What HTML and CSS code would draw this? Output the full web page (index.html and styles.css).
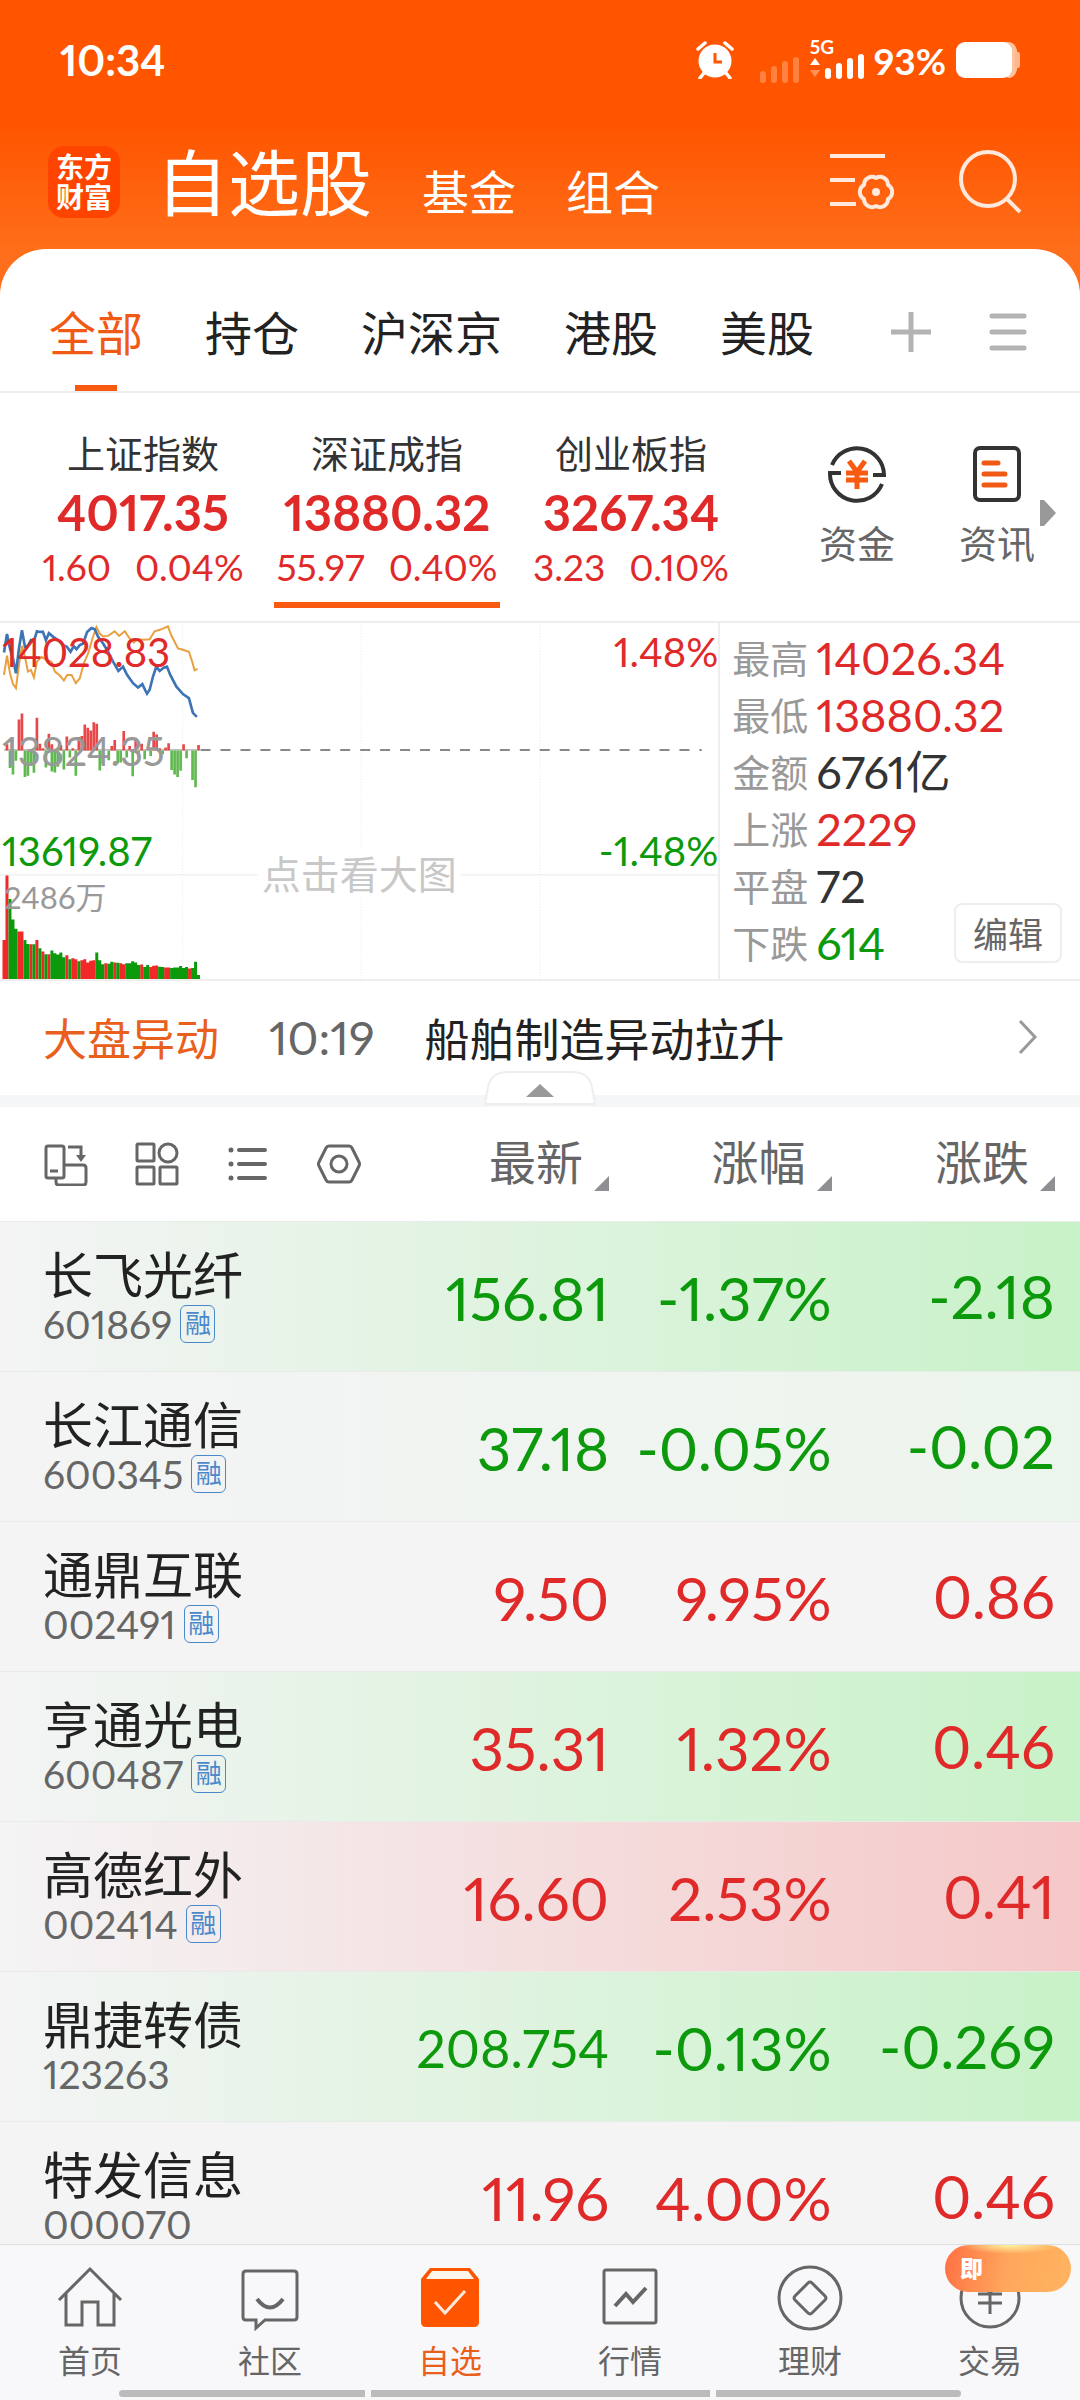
FILE: index.html
```html
<!DOCTYPE html>
<html lang="zh-CN">
<head>
<meta charset="utf-8">
<meta name="viewport" content="width=device-width, initial-scale=1">
<title>自选股</title>
<link rel="stylesheet" href="styles.css">
</head>
<body>
<header class="top">
  <div class="status">
    <span class="clock">10:34</span>
    <div class="status-icons">
      <svg class="alarm" viewBox="0 0 38 38" width="38" height="38">
        <circle cx="19" cy="20" r="16.500" fill="#fff"/>
        <path d="M2 8 9 2M36 8 29 2M8 32 4 37M30 32l4 5" stroke="#fff" stroke-width="3.500" stroke-linecap="round"/>
        <path d="M19 12v9h7" fill="none" stroke="#ff5500" stroke-width="3"/>
      </svg>
      <svg viewBox="0 0 40 26" width="40" height="26"><path d="M3 23v-6M14 23V12M25 23V7M36 23V3" stroke="#ff8240" stroke-width="6" stroke-linecap="round"/></svg>
      <div class="net"><span>5G</span>
        <svg viewBox="0 0 54 26" width="54" height="26"><path d="M0 11 5 4l5 7z" fill="#fff"/><path d="M0 16h10l-5 7z" fill="#ff9257"/><path d="M18 22v-5M29 22V12M40 22V7M51 22V3" stroke="#fff" stroke-width="6" stroke-linecap="round"/></svg>
      </div>
      <span class="battery-text">93%</span>
      <svg viewBox="0 0 64 38" width="64" height="38"><path d="M10 1h42q10 0 10 18T52 37" fill="#ffc29f"/><rect x="59" y="11" width="5" height="16" rx="2" fill="#ffb68c"/><rect x="0" y="1" width="56" height="36" rx="9" fill="#fff"/></svg>
    </div>
  </div>
  <div class="bar">
    <div class="logo">东方<br>财富</div>
    <nav class="sections">
      <a class="big" href="#">自选股</a><a href="#">基金</a><a href="#">组合</a>
    </nav>
    <div class="bar-actions">
      <button aria-label="设置">
        <svg viewBox="0 0 64 60" width="64" height="60" fill="none" stroke="#ffe9dc" stroke-width="4"><path d="M0 4h55M0 28h25M0 52h26"/><path d="M58 47A8 8 0 0 1 46 54A8 8 0 0 1 34 47A8 8 0 0 1 34 33A8 8 0 0 1 46 26A8 8 0 0 1 58 33A8 8 0 0 1 58 47z" stroke-linejoin="round"/><circle cx="46" cy="40" r="4" fill="#ffe9dc" stroke="none"/></svg>
      </button>
      <button aria-label="搜索">
        <svg viewBox="0 0 64 66" width="64" height="66" fill="none" stroke="#ffe9dc" stroke-width="4"><circle cx="30" cy="30" r="27"/><path d="m49 50 13 13"/></svg>
      </button>
    </div>
  </div>
</header>

<main class="sheet">
  <nav class="tabs">
    <a class="on" href="#">全部</a><a href="#">持仓</a><a href="#">沪深京</a><a href="#">港股</a><a href="#">美股</a>
    <div class="tab-actions">
      <button aria-label="添加"><svg viewBox="0 0 40 40" width="40" height="40" stroke="#b3b3b3" stroke-width="5"><path d="M20 0v40M0 20h40"/></svg></button>
      <button aria-label="列表"><svg viewBox="0 0 38 38" width="38" height="38" stroke="#b3b3b3" stroke-width="5" stroke-linecap="round"><path d="M3 3h32M3 19h32M3 35h32"/></svg></button>
    </div>
  </nav>

  <section class="indices">
    <button class="index"><span class="iname">上证指数</span><b>4017.35</b><span class="delta"><i>1.60</i><i>0.04%</i></span></button>
    <button class="index current"><span class="iname">深证成指</span><b>13880.32</b><span class="delta"><i>55.97</i><i>0.40%</i></span></button>
    <button class="index"><span class="iname">创业板指</span><b>3267.34</b><span class="delta"><i>3.23</i><i>0.10%</i></span></button>
    <div class="tools">
      <a href="#"><svg viewBox="0 0 60 60" width="60" height="60" fill="none" stroke="#333" stroke-width="4"><path d="M5 21A27 27 0 0 1 57 31H46M55 40A27 27 0 0 1 3 29h11"/><path d="m22 17 8 11 8-11M30 28v17M19 29h22M19 36h22" stroke="#f85a10" stroke-width="5"/></svg>资金</a>
      <a href="#"><svg viewBox="0 0 48 60" width="48" height="60" fill="none" stroke="#333" stroke-width="4"><rect x="2" y="4" width="44" height="52" rx="5"/><path d="M11 19h14M11 30h21M11 41h21" stroke="#f05a14" stroke-width="5" stroke-linecap="round"/></svg>资讯</a>
      <svg class="more" viewBox="0 0 16 26" width="16" height="26"><path d="M0 0h4l12 13L4 26H0z" fill="#999"/></svg>
    </div>
  </section>

  <section class="market">
    <div class="chart">
      <svg class="plot" viewBox="0 33 2160 1077" preserveAspectRatio="none" fill="none">
        <path d="M549 36V1110M1086 36V1110M1623 36V1110" stroke="#eee" stroke-width="3" stroke-dasharray="4 5"/>
        <path d="M0 795H2160" stroke="#eee" stroke-width="4"/>
        <path d="M12 417H600" stroke="#aaa" stroke-width="4"/>
        <path d="M603 417H2110" stroke="#888" stroke-width="6" stroke-dasharray="30 30"/>
        <path class="minor" d="M12 190 21 132 30 185 39 218 48 230 57 160 66 102 75 135 84 180 93 175 102 198 111 150 125 135 140 145 155 150 165 180 180 192 192 207 202 190 215 190 228 215 240 200 252 155 265 125 278 80 290 45 300 65 310 74 325 72 345 58 358 72 375 58 390 80 402 92 415 82 432 84 450 82 465 58 485 52 505 43 515 70 535 110 550 114 568 120 578 150 585 176 594 172"/>
        <path class="price" d="M12 122 21 66 30 110 39 140 48 185 57 110 66 55 75 105 84 102 93 85 102 88 111 58 120 60 129 60 138 85 147 64 160 75 175 85 190 100 201 105 212 120 222 103 230 112 240 100 250 95 262 60 275 48 285 52 295 75 310 95 325 120 340 150 356 178 370 165 382 190 400 215 415 228 428 218 436 235 442 247 450 235 460 195 470 165 480 178 492 168 502 165 512 190 530 225 550 248 568 260 580 305 592 317"/>
        <path class="flow-up" d="M21 419V400M57 419V325M66 419V307M111 419V320M120 419V398M129 419V412M147 419V368M156 419V400M183 419V403M201 419V376M219 419V412M237 419V378M246 419V375M255 419V340M264 419V350M273 419V358M282 419V333M291 419V338M336 419V405M345 419V387M372 419V360M390 419V405M408 419V380M426 419V398M462 419V362M471 419V370M480 419V412M498 419V410M507 419V397M552 419V400M597 419V402"/>
        <path class="flow-down" d="M30 419V472M39 419V491M48 419V450M75 419V499M84 419V495M93 419V465M102 419V486M138 419V470M156 419V482M165 419V485M174 419V468M192 419V476M210 419V440M228 419V495M300 419V479M309 419V460M327 419V448M354 419V458M363 419V455M381 419V440M399 419V497M417 419V440M435 419V445M453 419V435M489 419V430M516 419V478M525 419V491M534 419V499M543 419V480M561 419V442M579 419V508M588 419V530"/>
        <path class="vol-up" d="M12 1110V992M21 1110V797M57 1110V966M66 1110V966M93 1110V1005M111 1110V992M129 1110V1027M147 1110V1035M201 1110V1038M219 1110V1047M228 1110V1050M246 1110V1053M255 1110V1050M264 1110V1060M273 1110V1055M282 1110V1053M318 1110V1062M345 1110V1060M363 1110V1062M372 1110V1065M426 1110V1066M453 1110V1074M462 1110V1070M471 1110V1069M498 1110V1075M507 1110V1075M570 1110V1078"/>
        <path class="vol-down" d="M30 1110V868M39 1110V930M48 1110V958M75 1110V992M84 1110V1004M102 1110V1005M120 1110V1017M138 1110V1035M156 1110V1024M165 1110V1032M174 1110V1036M183 1110V1030M192 1110V1044M210 1110V1050M237 1110V1056M291 1110V1030M300 1110V1053M309 1110V1065M327 1110V1064M336 1110V1058M354 1110V1061M381 1110V1062M390 1110V1062M399 1110V1056M408 1110V1060M417 1110V1068M435 1110V1074M444 1110V1068M480 1110V1073M489 1110V1074M516 1110V1077M525 1110V1075M534 1110V1075M543 1110V1071M552 1110V1077M561 1110V1074M579 1110V1077M588 1110V1058M597 1110V1098"/>
      </svg>
      <span class="axis hi up">14028.83</span><span class="axis hi right up">1.48%</span>
      <span class="axis mid">13824.35</span>
      <span class="axis lo down">13619.87</span><span class="axis lo right down">-1.48%</span>
      <span class="vol-label">2486万</span>
      <span class="hint">点击看大图</span>
    </div>
    <div class="stats">
      <dl>
        <dt>最高</dt><dd class="up">14026.34</dd>
        <dt>最低</dt><dd class="up">13880.32</dd>
        <dt>金额</dt><dd>6761亿</dd>
        <dt>上涨</dt><dd class="up">2229</dd>
        <dt>平盘</dt><dd>72</dd>
        <dt>下跌</dt><dd class="down">614</dd>
      </dl>
      <button class="edit">编辑</button>
    </div>
  </section>

  <a class="news" href="#">
    <span class="tag">大盘异动</span><time>10:19</time><span>船舶制造异动拉升</span>
    <svg viewBox="0 0 20 36" width="20" height="36" fill="none" stroke="#999" stroke-width="3"><path d="m2 2 15 16L2 34"/></svg>
  </a>
  <div class="divider">
    <button class="fold" aria-label="收起"><svg viewBox="0 0 112 34" width="112" height="34"><path d="M1 33 4 16Q7 1 24 1h64q17 0 20 15l3 17z" fill="#fff" stroke="#eee" stroke-width="2"/><path d="M42 26 56 13l14 13z" fill="#999"/></svg></button>
  </div>

  <table class="quotes">
    <colgroup><col class="c-name"><col class="c-price"><col class="c-pct"><col class="c-chg"></colgroup>
    <thead>
      <tr>
        <th>
          <div class="views">
            <button aria-label="横屏"><svg viewBox="0 0 44 44" width="44" height="44"><rect x="2" y="4" width="18" height="32" rx="2"/><path d="M24 5h13v12M12 36v4q0 3 3 3h24q3 0 3-3V26q0-3-3-3H20M6 29h8"/><path d="m32 13 5 7 5-7z" fill="#666" stroke="none"/></svg></button>
            <button aria-label="宫格"><svg viewBox="0 0 44 44" width="44" height="44"><rect x="2" y="2" width="17" height="17" rx="1"/><circle cx="33" cy="11" r="9"/><rect x="2" y="25" width="17" height="17" rx="1"/><rect x="25" y="25" width="17" height="17" rx="1"/></svg></button>
            <button aria-label="列表"><svg viewBox="0 0 44 44" width="44" height="44" stroke-linecap="round"><path class="lines" d="M13 8h26M13 22h26M13 36h26"/><path class="dots" d="M5 8v0M5 22v0M5 36v0"/></svg></button>
            <button aria-label="设置"><svg viewBox="0 0 44 44" width="44" height="44"><path d="M12 4h20q2 0 3 2l7 14q1 2 0 4l-7 14q-1 2-3 2H12q-2 0-3-2L2 24q-1-2 0-4L9 6q1-2 3-2z"/><circle cx="22" cy="22" r="8"/></svg></button>
          </div>
        </th>
        <th><button class="sort">最新</button></th><th><button class="sort">涨幅</button></th><th><button class="sort">涨跌</button></th>
      </tr>
    </thead>
    <tbody>
      <tr class="g2 down"><td><div class="stock">长飞光纤</div><div class="code">601869<em>融</em></div></td><td>156.81</td><td>-1.37%</td><td>-2.18</td></tr>
      <tr class="g1 down"><td><div class="stock">长江通信</div><div class="code">600345<em>融</em></div></td><td>37.18</td><td>-0.05%</td><td>-0.02</td></tr>
      <tr class="up"><td><div class="stock">通鼎互联</div><div class="code">002491<em>融</em></div></td><td>9.50</td><td>9.95%</td><td>0.86</td></tr>
      <tr class="g2 up"><td><div class="stock">亨通光电</div><div class="code">600487<em>融</em></div></td><td>35.31</td><td>1.32%</td><td>0.46</td></tr>
      <tr class="r2 up"><td><div class="stock">高德红外</div><div class="code">002414<em>融</em></div></td><td>16.60</td><td>2.53%</td><td>0.41</td></tr>
      <tr class="g2 down"><td><div class="stock">鼎捷转债</div><div class="code">123263</div></td><td class="long">208.754</td><td>-0.13%</td><td>-0.269</td></tr>
      <tr class="up"><td><div class="stock">特发信息</div><div class="code">000070</div></td><td>11.96</td><td>4.00%</td><td>0.46</td></tr>
    </tbody>
  </table>
</main>

<footer class="dock">
  <nav>
    <a href="#"><svg viewBox="0 0 66 66" width="66" height="66"><path d="M2 35 33 4l31 31M9 29v31h16V37h16v23h16V29"/></svg>首页</a>
    <a href="#"><svg viewBox="0 0 66 66" width="66" height="66"><path d="M9 6h48q3 0 3 3v43q0 3-3 3H28l-9 8v-8H9q-3 0-3-3V9q0-3 3-3z"/><path d="M20 34q13 17 26 0" stroke-width="4"/></svg>社区</a>
    <a class="on" href="#"><svg viewBox="0 0 66 66" width="66" height="66"><path d="M13 3h40l9 11v43q0 5-5 5H9q-5 0-5-5V14z" fill="#ff5500" stroke="none"/><path d="m15 6-6 8h48l-6-8z" fill="#fff4ec" stroke="none"/><path d="m18 37 10 11 20-22" stroke="#ffe9dc"/></svg>自选</a>
    <a href="#"><svg viewBox="0 0 66 66" width="66" height="66"><rect x="7" y="5" width="52" height="53" rx="2"/><path d="m18 41 11-12 7 8 13-14" stroke-width="4"/></svg>行情</a>
    <a href="#"><svg viewBox="0 0 66 66" width="66" height="66"><circle cx="33" cy="33" r="31"/><path d="m31 18-13 13q-2 2 0 4l13 13q2 2 4 0l13-13q2-2 0-4L35 18q-2-2-4 0z"/></svg>理财</a>
    <a href="#"><svg viewBox="0 0 66 66" width="66" height="66"><circle cx="33" cy="33" r="29"/><path d="m24 17 9 11 9-11M33 28v21M21 29h24M21 38h24"/></svg>交易<span class="promo">即</span></a>
  </nav>
  <div class="home"><i></i><i></i><i></i></div>
</footer>
</body>
</html>
```
FILE: styles.css
```css
* { box-sizing: border-box; }
body {
  margin: 0;
  height: 100vh;
  display: flex;
  flex-direction: column;
  overflow: hidden;
  background: #ff6e1a;
  color: #222;
  font-family: Lato, "Noto Sans CJK SC", sans-serif;
  font-variant-numeric: proportional-nums;
}
a { color: inherit; text-decoration: none; }
button { font: inherit; color: inherit; background: none; border: 0; padding: 0; }
i, em { font-style: normal; }
svg { display: block; flex: none; }
.up { color: #e02a2a; }
.down { color: #0c9a0c; }

.top { flex: none; color: #fff; background: linear-gradient(#ff5500 50%, #ff6e1a); }
.status { display: flex; align-items: center; justify-content: space-between; height: 120px; padding: 0 60px; }
.clock { font-size: 42px; font-weight: 700; }
.status-icons { display: flex; align-items: center; gap: 10px; }
.alarm + svg { margin-left: 16px; align-self: flex-end; }
.net { display: flex; flex-direction: column; font-size: 19px; line-height: 14px; font-weight: 700; }
.battery-text { font-size: 37px; font-weight: 700; }
.bar { display: flex; align-items: center; height: 129px; padding: 0 58px 6px 48px; }
.logo { width: 72px; height: 72px; padding-top: 6px; border-radius: 16px; background: #ff4400; font-size: 28px; line-height: 30px; font-weight: 700; text-align: center; }
.sections { display: flex; align-items: baseline; margin-left: 36px; gap: 50px; font-size: 47px; }
.sections .big { font-size: 72px; line-height: 90px; }
.bar-actions { display: flex; gap: 64px; margin-left: auto; }

.sheet { flex: 1; min-height: 0; overflow: hidden; background: #fff; border-radius: 46px 46px 0 0; }
.tabs { display: flex; gap: 62px; height: 144px; padding: 24px 53px 0 49px; border-bottom: 2px solid #eee; font-size: 47px; line-height: 120px; }
.tabs .on { color: #f05a14; background: linear-gradient(#f85a10, #f85a10) center 112px / 42px 6px no-repeat; }
.tab-actions { display: flex; align-items: center; gap: 58px; margin-left: auto; }

.indices { display: flex; height: 228px; padding-left: 21px; }
.index { display: flex; flex: 0 1 244px; flex-direction: column; align-items: center; padding-top: 33px; color: #e02a2a; }
.iname { font-size: 38px; line-height: 54px; color: #333; }
.index b { font-size: 49px; line-height: 64px; }
.delta { display: flex; gap: 24px; font-size: 37px; line-height: 46px; }
.current { background: linear-gradient(#f85a10, #f85a10) center 209px / 226px 6px no-repeat; }
.tools { position: relative; flex: 1; display: flex; justify-content: flex-end; gap: 64px; padding: 51px 45px 0 0; font-size: 38px; line-height: 54px; color: #666; }
.tools a { display: flex; flex-direction: column; align-items: center; gap: 12px; }
.more { position: absolute; right: 24px; top: 107px; }

.market { display: flex; height: 360px; border: solid #eee; border-width: 2px 0; }
.chart { position: relative; flex: none; width: 66.7%; border-right: 2px solid #eee; font-size: 40px; line-height: 48px; }
.plot { width: 100%; height: 100%; }
.minor { stroke: #e8a040; stroke-width: 6; }
.price { stroke: #3d74b5; stroke-width: 8; }
.flow-up { stroke: #e84848; stroke-width: 8; }
.flow-down { stroke: #60b850; stroke-width: 8; }
.vol-up { stroke: #f02828; stroke-width: 9; }
.vol-down { stroke: #0c9a0c; stroke-width: 9; }
.axis { position: absolute; left: 2px; }
.right { left: auto; right: 0; }
.hi { top: 5px; }
.mid { top: 104px; color: #999; }
.lo { top: 204px; }
.vol-label { position: absolute; left: 4px; top: 250px; font-size: 31px; color: #999; }
.hint { position: absolute; left: 50%; top: 227px; transform: translateX(-50%); padding: 0 4px; background: #fff; font-size: 39px; color: #c8c8c8; }
.stats { position: relative; flex: 1; padding: 7px 0 0 12px; }
.stats dl { display: grid; grid-template-columns: 76px 1fr; column-gap: 8px; margin: 0; font-size: 38px; line-height: 57px; color: #999; }
.stats dd { margin: 0; font-size: 45px; }
.stats dd:not([class]) { color: #333; }
.edit { position: absolute; right: 18px; bottom: 16px; width: 108px; height: 60px; padding-bottom: 2px; border: 2px solid #eee; border-radius: 8px; font-size: 35px; color: #666; }

.news { display: flex; align-items: center; height: 114px; padding: 0 42px 2px 43px; font-size: 45px; }
.news .tag { font-size: 44px; color: #e8601c; }
.news time { margin: 0 50px; font-size: 47px; color: #666; }
.news svg { margin-left: auto; }
.divider { position: relative; height: 12px; background: #f5f6f8; }
.fold { position: absolute; left: 50%; bottom: 2px; margin-left: -56px; }

.quotes { width: 100%; table-layout: fixed; border-collapse: collapse; }
.c-name { width: 34%; }
.c-price { width: 22.4%; }
.c-pct { width: 20.6%; }
.c-chg { width: 23%; }
.quotes th { height: 114px; padding: 0; font-weight: 400; text-align: right; }
.views { display: flex; gap: 47px; padding-left: 44px; }
.views svg { fill: none; stroke: #666; stroke-width: 3; }
.views .lines { stroke-width: 4; }
.views .dots { stroke-width: 5; }
.sort { display: inline-flex; align-items: flex-end; gap: 11px; padding-bottom: 3px; font-size: 47px; line-height: 57px; color: #666; }
.sort::after { content: ""; border-style: solid; border-width: 0 0 15px 15px; border-color: transparent transparent #8e8e93; }
.quotes td { height: 150px; padding: 4px 0 0; text-align: right; font-size: 60px; line-height: 72px; white-space: nowrap; }
.quotes td.long { font-size: 52px; }
.quotes td:last-child, .quotes th:last-child { padding-right: 25px; }
.quotes td:last-child { padding-top: 0; }
.quotes td:first-child { padding: 0 0 4px 43px; text-align: left; }
.quotes tbody tr { background: #f4f4f5; border-top: 1px solid #e8ebe8; }
.quotes .g2 { background: linear-gradient(90deg, #f4f4f5, #c8f2c8); }
.quotes .g1 { background: linear-gradient(90deg, #f4f4f5, #ecf5ec); }
.quotes .r2 { background: linear-gradient(90deg, #f4f4f5, #f5c8c8); }
.stock { font-size: 50px; line-height: 60px; color: #222; }
.code { display: flex; align-items: center; gap: 8px; font-size: 39px; line-height: 38px; color: #666; }
.code em { width: 35px; height: 38px; border: 1px solid #4a88cc; border-radius: 6px; font-size: 26px; line-height: 35px; text-align: center; color: #4a88cc; }

.dock { flex: none; height: 156px; background: #f8f8fa; border-top: 1px solid #e0e0e2; }
.dock nav { display: flex; height: 145px; }
.dock a { position: relative; flex: 1; display: flex; flex-direction: column; align-items: center; padding-top: 20px; font-size: 32px; line-height: 60px; color: #666; }
.dock .on { color: #e8601c; }
.dock svg { fill: none; stroke: #666; stroke-width: 3; }
.promo { position: absolute; right: 9px; top: 0; width: 126px; height: 47px; padding-left: 15px; border-radius: 24px; background: radial-gradient(ellipse 50px 9px at 65px 0, #fff3a0, transparent), linear-gradient(100deg, #ff7043, #ffa75c 50%, #ffb460); font-size: 23px; line-height: 46px; font-weight: 900; color: #fff; }
.home { display: flex; gap: 6px; height: 7px; margin: 0 11%; }
.home i { flex: 245; background: #bbb; }
.home i:nth-child(2) { flex: 338; }
.home i:first-child { border-radius: 4px 0 0 4px; }
.home i:last-child { border-radius: 0 4px 4px 0; }
```
